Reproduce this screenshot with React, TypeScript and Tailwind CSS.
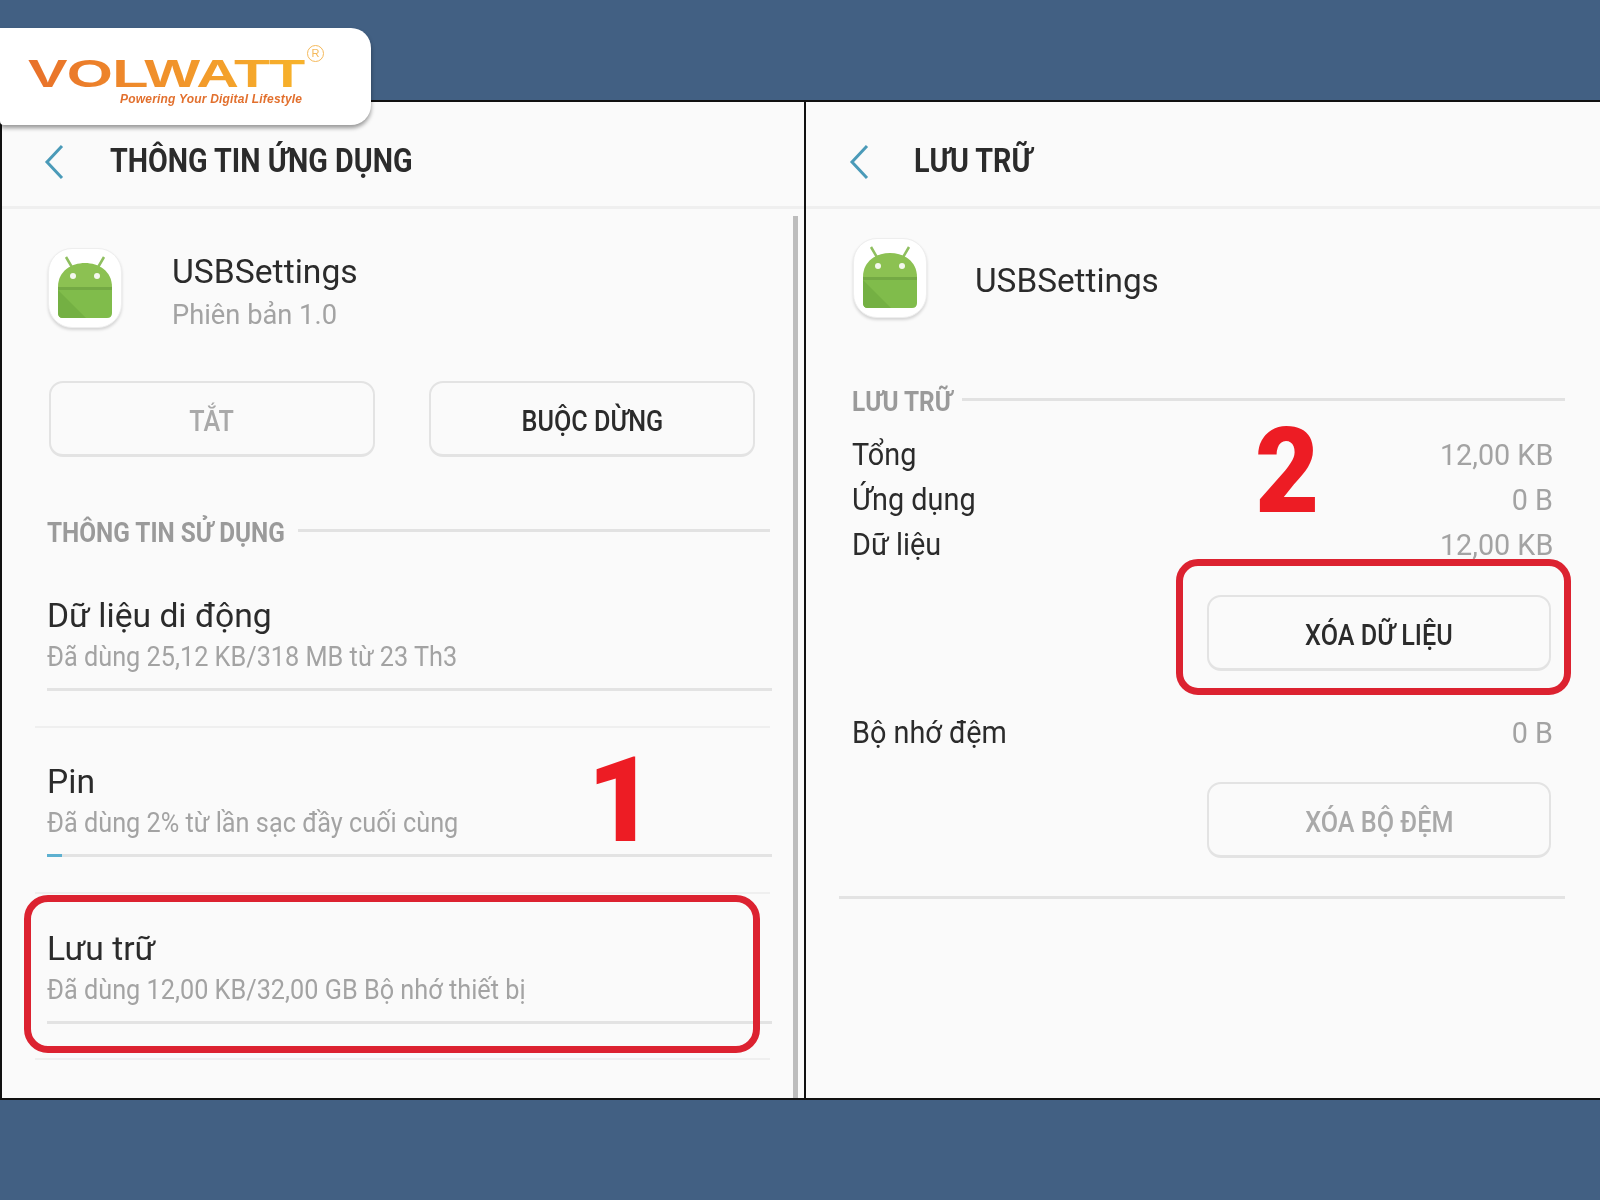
const roboto = "font-['Roboto',sans-serif]";

function BackHeader({ title, chevronClass, titleClass }: { title: string; chevronClass: string; titleClass: string }) {
  return (
    <div className="h-[107px] shrink-0 pt-[14px] flex items-center border-b-[3px] border-[#efefef]">
      <svg width="20" height="36" viewBox="0 0 20 36" className={`mt-[2px] shrink-0 ${chevronClass}`}>
        <path d="M18 2 L3 18 L18 34" fill="none" stroke="#4a9ab8" strokeWidth="3" />
      </svg>
      <span className={`text-[33px] font-bold text-[#2b2b2b] whitespace-nowrap origin-left scale-x-[0.87] ${titleClass}`}>{title}</span>
    </div>
  );
}

function AndroidIcon() {
  return (
    <div className="w-[74px] h-[80px] shrink-0 rounded-[24px] bg-white border border-[#eeeeee] shadow-[0_2px_3px_rgba(0,0,0,0.15)] flex items-center justify-center">
      <svg width="58" height="64" viewBox="0 0 58 64">
        <path d="M10 1 L17 13 M48 1 L41 13" stroke="#8fbf5f" strokeWidth="2.5" fill="none" />
        <path d="M2 31 C2 -1 56 -1 56 31 Z" fill="#8cc152" />
        <path d="M2 31 H56 V57 Q56 62 51 62 H7 Q2 62 2 57 Z" fill="#80bc4b" />
        <path d="M2 31 H56 V34 H2 Z" fill="#74a944" />
        <path d="M2 34 L30 62 H7 Q2 62 2 57 Z" fill="#74b043" />
        <circle cx="17" cy="20" r="3" fill="#f4f8ee" />
        <circle cx="41" cy="20" r="3" fill="#f4f8ee" />
      </svg>
    </div>
  );
}

function OutlineButton({ label, muted, className }: { label: string; muted?: boolean; className: string }) {
  return (
    <div className={`h-[76px] pt-[4px] rounded-[14px] border-2 border-[#e3e3e3] border-b-[3px] flex items-center justify-center ${className}`}>
      <span className={`text-[30px] font-medium whitespace-nowrap scale-x-[0.84] ${muted ? "text-[#a9a9a9]" : "text-[#2b2b2b]"}`}>{label}</span>
    </div>
  );
}

function SectionTitle({ label, labelWidth }: { label: string; labelWidth: string }) {
  return (
    <div className="flex items-center">
      <div className={`${labelWidth} shrink-0`}>
        <span className="inline-block text-[28px] font-bold text-[#9a9a9a] whitespace-nowrap origin-left scale-x-[0.87] translate-y-[3px]">{label}</span>
      </div>
      <div className="h-[3px] bg-[#e2e2e2] flex-1" />
    </div>
  );
}

function UsageRow({ title, sub, fill }: { title: string; sub: string; fill?: boolean }) {
  return (
    <div className="pl-[45px] pr-[32px]">
      <div className="text-[33px] leading-[40px] text-[#2b2b2b] origin-left scale-x-[1.02] whitespace-nowrap">{title}</div>
      <div className="mt-[2px] text-[27px] leading-[38px] text-[#a3a3a3] origin-left scale-x-[0.936] whitespace-nowrap">{sub}</div>
      <div className="mt-[12px] h-[3px] bg-[#e3e3e3]">{fill && <div className="h-full w-[15px] bg-[#5db0d0]" />}</div>
    </div>
  );
}

function StorageRow({ label, value }: { label: string; value: string }) {
  return (
    <div className="h-[45px] flex items-center justify-between">
      <span className="text-[31px] text-[#2b2b2b] origin-left scale-x-[0.93] whitespace-nowrap">{label}</span>
      <span className="text-[30px] text-[#a3a3a3] origin-right scale-x-[0.958] -translate-y-[1px] whitespace-nowrap">{value}</span>
    </div>
  );
}

function Logo() {
  return (
    <div className="absolute left-0 top-[28px] w-[371px] h-[97px] bg-white rounded-r-[20px] rounded-bl-[4px] shadow-[0_3px_4px_rgba(0,0,0,0.4)] z-20">
      <div className="absolute left-[28px] top-[31px] font-['Liberation_Sans',sans-serif] font-bold text-[39px] leading-[30px] whitespace-nowrap origin-left scale-x-[1.52] text-transparent bg-clip-text bg-gradient-to-r from-[#e8702a] to-[#f7b32b] tracking-[-0.5px]">
        VOLWATT
      </div>
      <div className="absolute left-[120px] top-[64px] font-['Liberation_Sans',sans-serif] font-bold italic text-[12px] leading-[14px] tracking-[0.2px] text-[#e2702e] whitespace-nowrap">
        Powering Your Digital Lifestyle
      </div>
      <div className="absolute left-[307px] top-[17px] w-[17px] h-[17px] rounded-full border border-[#f5b95a] text-[#f5b95a] text-[11px] leading-[15px] text-center font-['Liberation_Sans',sans-serif]">
        R
      </div>
    </div>
  );
}

export default function App() {
  return (
    <div className={`relative w-[1600px] h-[1200px] bg-[#426083] overflow-hidden flex flex-col blur-[0.4px] ${roboto}`}>
      <Logo />
      <div className="h-[100px] shrink-0" />

      <div className="h-[1000px] shrink-0 flex border-y-2 border-[#111111] bg-[#fafafa]">
        {/* left screen */}
        <div className="relative w-[806px] shrink-0 border-l-2 border-r-2 border-[#111111]">
          <BackHeader title="THÔNG TIN ỨNG DỤNG" chevronClass="ml-[42px]" titleClass="ml-[46px]" />

          <div className="pl-[46px] pt-[39px] flex gap-[50px] h-[118px]">
            <AndroidIcon />
            <div>
              <div className="text-[34px] leading-[46px] text-[#2b2b2b] origin-left scale-x-[0.99] whitespace-nowrap">USBSettings</div>
              <div className="text-[28px] leading-[42px] text-[#a3a3a3] origin-left scale-x-[0.974] whitespace-nowrap">Phiên bản 1.0</div>
            </div>
          </div>

          <div className="mt-[54px] pl-[47px] flex gap-[54px]">
            <OutlineButton label="TẮT" muted className="w-[326px]" />
            <OutlineButton label="BUỘC DỪNG" className="w-[326px]" />
          </div>

          <div className="mt-[52px] pl-[45px] pr-[34px]">
            <SectionTitle label="THÔNG TIN SỬ DỤNG" labelWidth="w-[251px]" />
          </div>

          <div className="mt-[45px]"><UsageRow title="Dữ liệu di động" sub="Đã dùng 25,12 KB/318 MB từ 23 Th3" /></div>
          <div className="mt-[35px] ml-[33px] mr-[34px] h-[2px] bg-[#efefef]" />
          <div className="mt-[34px]"><UsageRow title="Pin" sub="Đã dùng 2% từ lần sạc đầy cuối cùng" fill /></div>
          <div className="mt-[35px] ml-[33px] mr-[34px] h-[2px] bg-[#efefef]" />
          <div className="mt-[35px]"><UsageRow title="Lưu trữ" sub="Đã dùng 12,00 KB/32,00 GB Bộ nhớ thiết bị" /></div>
          <div className="mt-[34px] ml-[33px] mr-[34px] h-[2px] bg-[#efefef]" />

          {/* scrollbar */}
          <div className="absolute right-[6px] top-[114px] bottom-0 w-[5px] bg-[#bdbdbd]" />

          {/* annotations */}
          <div className="absolute left-[22px] top-[793px] w-[736px] h-[158px] border-[7px] border-[#dc2230] rounded-[24px]" />
          <span className="absolute left-[585px] top-[612px] text-[118px] leading-[174px] font-black text-[#ed1c24]">1</span>
        </div>

        {/* right screen */}
        <div className="relative flex-1">
          <BackHeader title="LƯU TRỮ" chevronClass="ml-[43px]" titleClass="ml-[45px]" />

          <div className="pl-[47px] pt-[29px] flex items-center gap-[48px]">
            <AndroidIcon />
            <div className="text-[34px] leading-[46px] pt-[4px] text-[#2b2b2b] origin-left scale-x-[0.98] whitespace-nowrap">USBSettings</div>
          </div>

          <div className="mt-[60px] pl-[46px] pr-[35px]">
            <SectionTitle label="LƯU TRỮ" labelWidth="w-[110px]" />
          </div>

          <div className="mt-[13px] pl-[46px] pr-[47px]">
            <StorageRow label="Tổng" value="12,00 KB" />
            <StorageRow label="Ứng dụng" value="0 B" />
            <StorageRow label="Dữ liệu" value="12,00 KB" />
          </div>

          <div className="mt-[27px] flex justify-end pr-[49px]">
            <OutlineButton label="XÓA DỮ LIỆU" className="w-[344px]" />
          </div>

          <div className="mt-[40px] pl-[46px] pr-[47px]">
            <StorageRow label="Bộ nhớ đệm" value="0 B" />
          </div>

          <div className="mt-[26px] flex justify-end pr-[49px]">
            <OutlineButton label="XÓA BỘ ĐỆM" muted className="w-[344px]" />
          </div>

          <div className="mt-[38px] ml-[33px] mr-[35px] h-[3px] bg-[#e3e3e3]" />

          {/* annotations */}
          <div className="absolute left-[370px] top-[457px] w-[395px] h-[136px] border-[7px] border-[#dc2230] rounded-[22px]" />
          <span className="absolute left-[449px] top-[283px] text-[118px] leading-[174px] font-black text-[#ed1c24] scale-x-[0.94] origin-left">2</span>
        </div>
      </div>

      <div className="flex-1" />
    </div>
  );
}
